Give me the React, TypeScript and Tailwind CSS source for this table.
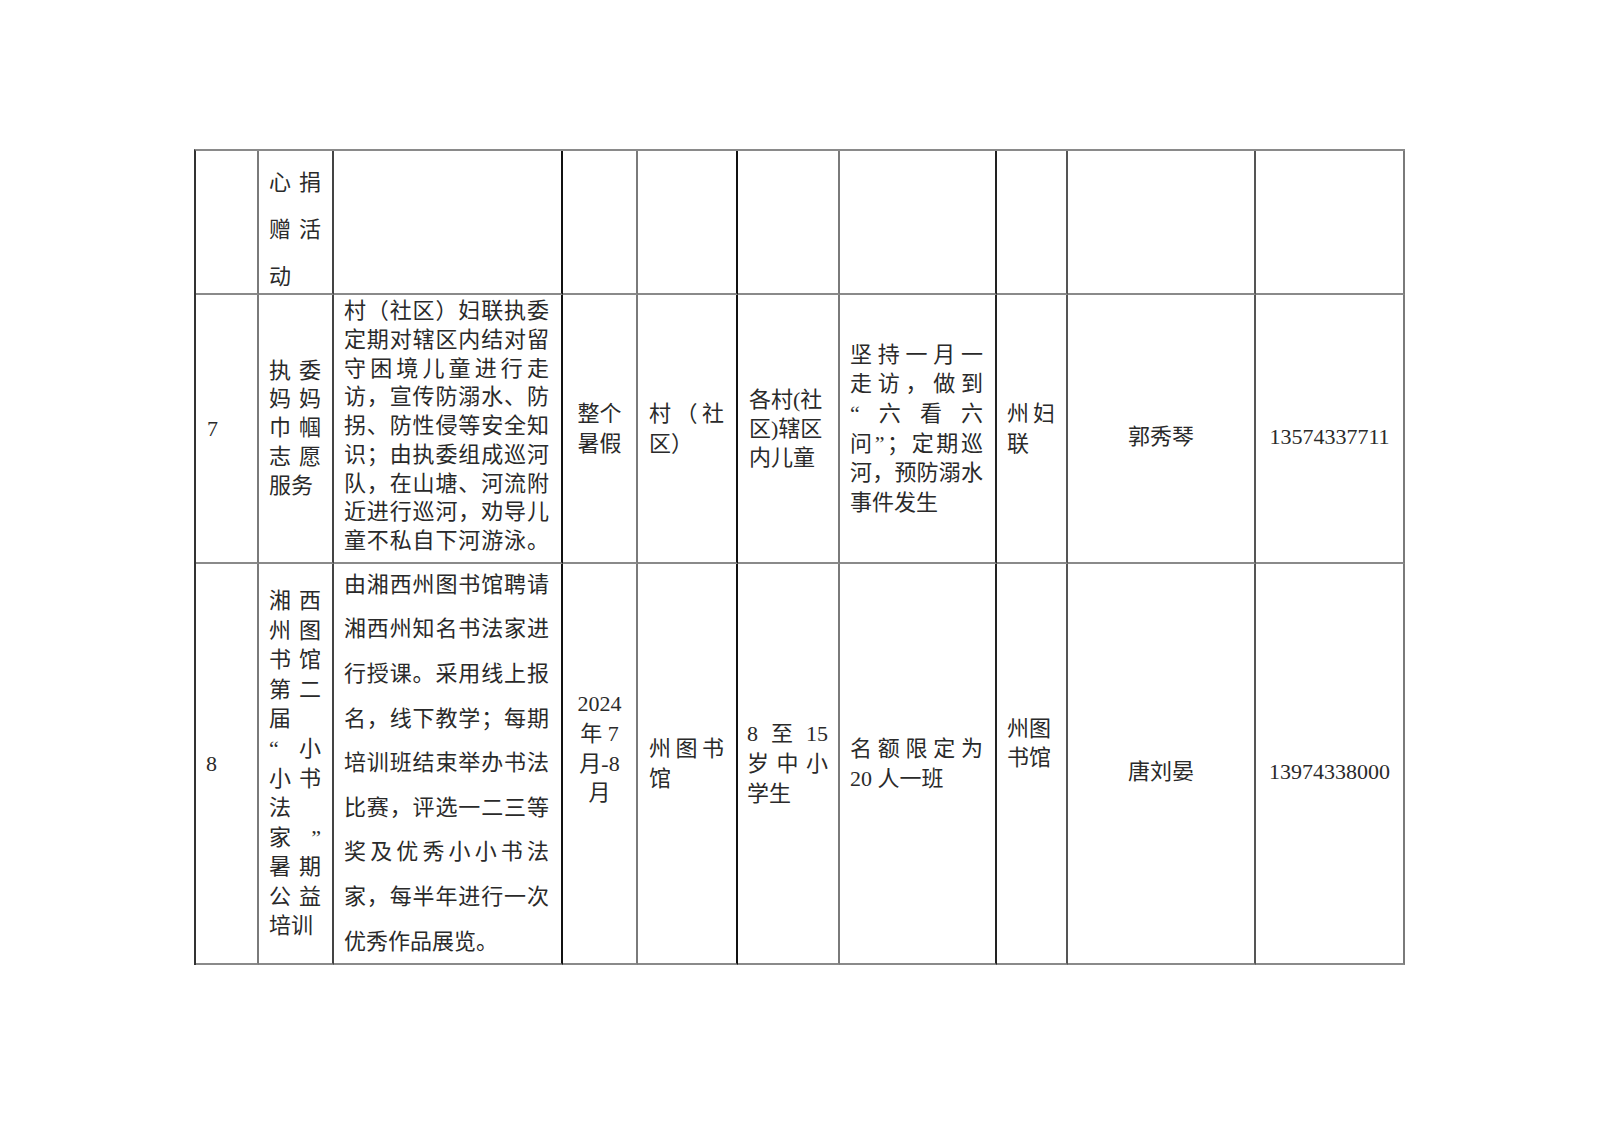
import React from "react";

type CellProps = {
  children?: React.ReactNode;
  className?: string;
};

function Cell({ children, className = "" }: CellProps) {
  return (
    <div
      className={`flex flex-col overflow-hidden border-b-2 border-r-2 border-b-[#8a8a8a] ${className}`}
    >
      {children}
    </div>
  );
}

function J({ t }: { t: string[] }) {
  return (
    <div className="flex justify-between">
      {t.map((c, i) => (
        <span key={i}>{c}</span>
      ))}
    </div>
  );
}

function L({ t }: { t: string }) {
  return <div className="whitespace-pre">{t}</div>;
}

const s = (x: string) => Array.from(x);

export default function App() {
  return (
    <div className="h-[1131px] w-[1600px] overflow-hidden bg-white font-['Liberation_Serif','Noto_Sans_CJK_SC',serif] text-[22px] text-[#2a2a2a]">
      <div className="ml-[194px] mt-[149px] grid w-fit grid-cols-[63px_75px_229px_75px_100px_102px_157px_71px_188px_149px] grid-rows-[144px_269px_401px] border-l-2 border-t-2 border-l-[#333] border-t-[#8a8a8a]">
        {/* Row 0 (continued) */}
        <Cell className="border-r-[#7a7a7a]" />
        <Cell className="justify-start border-r-[#444] pl-[10px] pr-[11px] pt-[8px] leading-[47px]">
          <J t={["心", "捐"]} />
          <J t={["赠", "活"]} />
          <L t="动" />
        </Cell>
        <Cell className="border-r-[#111]" />
        <Cell className="border-r-[#7a7a7a]" />
        <Cell className="border-r-[#111]" />
        <Cell className="border-r-[#7a7a7a]" />
        <Cell className="border-r-[#222]" />
        <Cell className="border-r-[#555]" />
        <Cell className="border-r-[#555]" />
        <Cell className="border-r-[#7a7a7a]" />

        {/* Row 7 */}
        <Cell className="justify-center border-r-[#7a7a7a] pl-[11px] leading-[29px]">
          <L t="7" />
        </Cell>
        <Cell className="justify-center border-r-[#444] pl-[10px] pr-[11px] leading-[28.7px]">
          <J t={["执", "委"]} />
          <J t={["妈", "妈"]} />
          <J t={["巾", "帼"]} />
          <J t={["志", "愿"]} />
          <L t="服务" />
        </Cell>
        <Cell className="justify-center border-r-[#111] pb-[4px] pl-[10px] pr-[12px] leading-[28.75px]">
          <J t={s("村（社区）妇联执委")} />
          <J t={s("定期对辖区内结对留")} />
          <J t={s("守困境儿童进行走")} />
          <J t={s("访，宣传防溺水、防")} />
          <J t={s("拐、防性侵等安全知")} />
          <J t={s("识；由执委组成巡河")} />
          <J t={s("队，在山塘、河流附")} />
          <J t={s("近进行巡河，劝导儿")} />
          <J t={s("童不私自下河游泳。")} />
        </Cell>
        <Cell className="items-center justify-center border-r-[#7a7a7a] text-center leading-[30px]">
          <L t="整个" />
          <L t="暑假" />
        </Cell>
        <Cell className="justify-center border-r-[#111] pl-[11px] pr-[12px] leading-[30px]">
          <J t={["村", "（", "社"]} />
          <L t="区）" />
        </Cell>
        <Cell className="justify-center border-r-[#7a7a7a] pl-[11px] pr-[11px] leading-[29.3px]">
          <L t="各村(社" />
          <L t="区)辖区" />
          <L t="内儿童" />
        </Cell>
        <Cell className="justify-center border-r-[#222] pl-[10px] pr-[12px] leading-[29.6px]">
          <J t={s("坚持一月一")} />
          <J t={s("走访，做到")} />
          <J t={["“", "六", "看", "六"]} />
          <J t={["问", "”", "；", "定", "期", "巡"]} />
          <J t={s("河，预防溺水")} />
          <L t="事件发生" />
        </Cell>
        <Cell className="justify-center border-r-[#555] pl-[10px] pr-[11px] leading-[30px]">
          <J t={["州", "妇"]} />
          <L t="联" />
        </Cell>
        <Cell className="items-center justify-center border-r-[#555] pt-[16px] text-center">
          <L t="郭秀琴" />
        </Cell>
        <Cell className="items-center justify-center border-r-[#7a7a7a] pt-[16px] text-center">
          <L t="13574337711" />
        </Cell>

        {/* Row 8 */}
        <Cell className="justify-center border-r-[#7a7a7a] pl-[10px] leading-[29px]">
          <L t="8" />
        </Cell>
        <Cell className="justify-center border-r-[#444] pl-[10px] pr-[11px] leading-[29.6px]">
          <J t={["湘", "西"]} />
          <J t={["州", "图"]} />
          <J t={["书", "馆"]} />
          <J t={["第", "二"]} />
          <L t="届" />
          <J t={["“", "小"]} />
          <J t={["小", "书"]} />
          <L t="法" />
          <J t={["家", "”"]} />
          <J t={["暑", "期"]} />
          <J t={["公", "益"]} />
          <L t="培训" />
        </Cell>
        <Cell className="justify-center border-r-[#111] pl-[10px] pr-[12px] leading-[44.6px]">
          <J t={s("由湘西州图书馆聘请")} />
          <J t={s("湘西州知名书法家进")} />
          <J t={s("行授课。采用线上报")} />
          <J t={s("名，线下教学；每期")} />
          <J t={s("培训班结束举办书法")} />
          <J t={s("比赛，评选一二三等")} />
          <J t={s("奖及优秀小小书法")} />
          <J t={s("家，每半年进行一次")} />
          <L t="优秀作品展览。" />
        </Cell>
        <Cell className="items-center justify-center border-r-[#7a7a7a] pb-[30px] text-center leading-[29.6px]">
          <L t="2024" />
          <L t="年 7" />
          <L t="月-8" />
          <L t="月" />
        </Cell>
        <Cell className="justify-center border-r-[#111] pl-[11px] pr-[12px] leading-[30px]">
          <J t={["州", "图", "书"]} />
          <L t="馆" />
        </Cell>
        <Cell className="justify-center border-r-[#7a7a7a] pl-[9px] pr-[10px] leading-[30px]">
          <J t={["8", "至", "15"]} />
          <J t={["岁", "中", "小"]} />
          <L t="学生" />
        </Cell>
        <Cell className="justify-center border-r-[#222] pl-[10px] pr-[12px] leading-[30px]">
          <J t={s("名额限定为")} />
          <L t="20 人一班" />
        </Cell>
        <Cell className="justify-center border-r-[#555] pb-[42px] pl-[10px] leading-[29px]">
          <L t="州图" />
          <L t="书馆" />
        </Cell>
        <Cell className="items-center justify-center border-r-[#555] pt-[16px] text-center">
          <L t="唐刘晏" />
        </Cell>
        <Cell className="items-center justify-center border-r-[#7a7a7a] pt-[16px] text-center">
          <L t="13974338000" />
        </Cell>
      </div>
    </div>
  );
}
